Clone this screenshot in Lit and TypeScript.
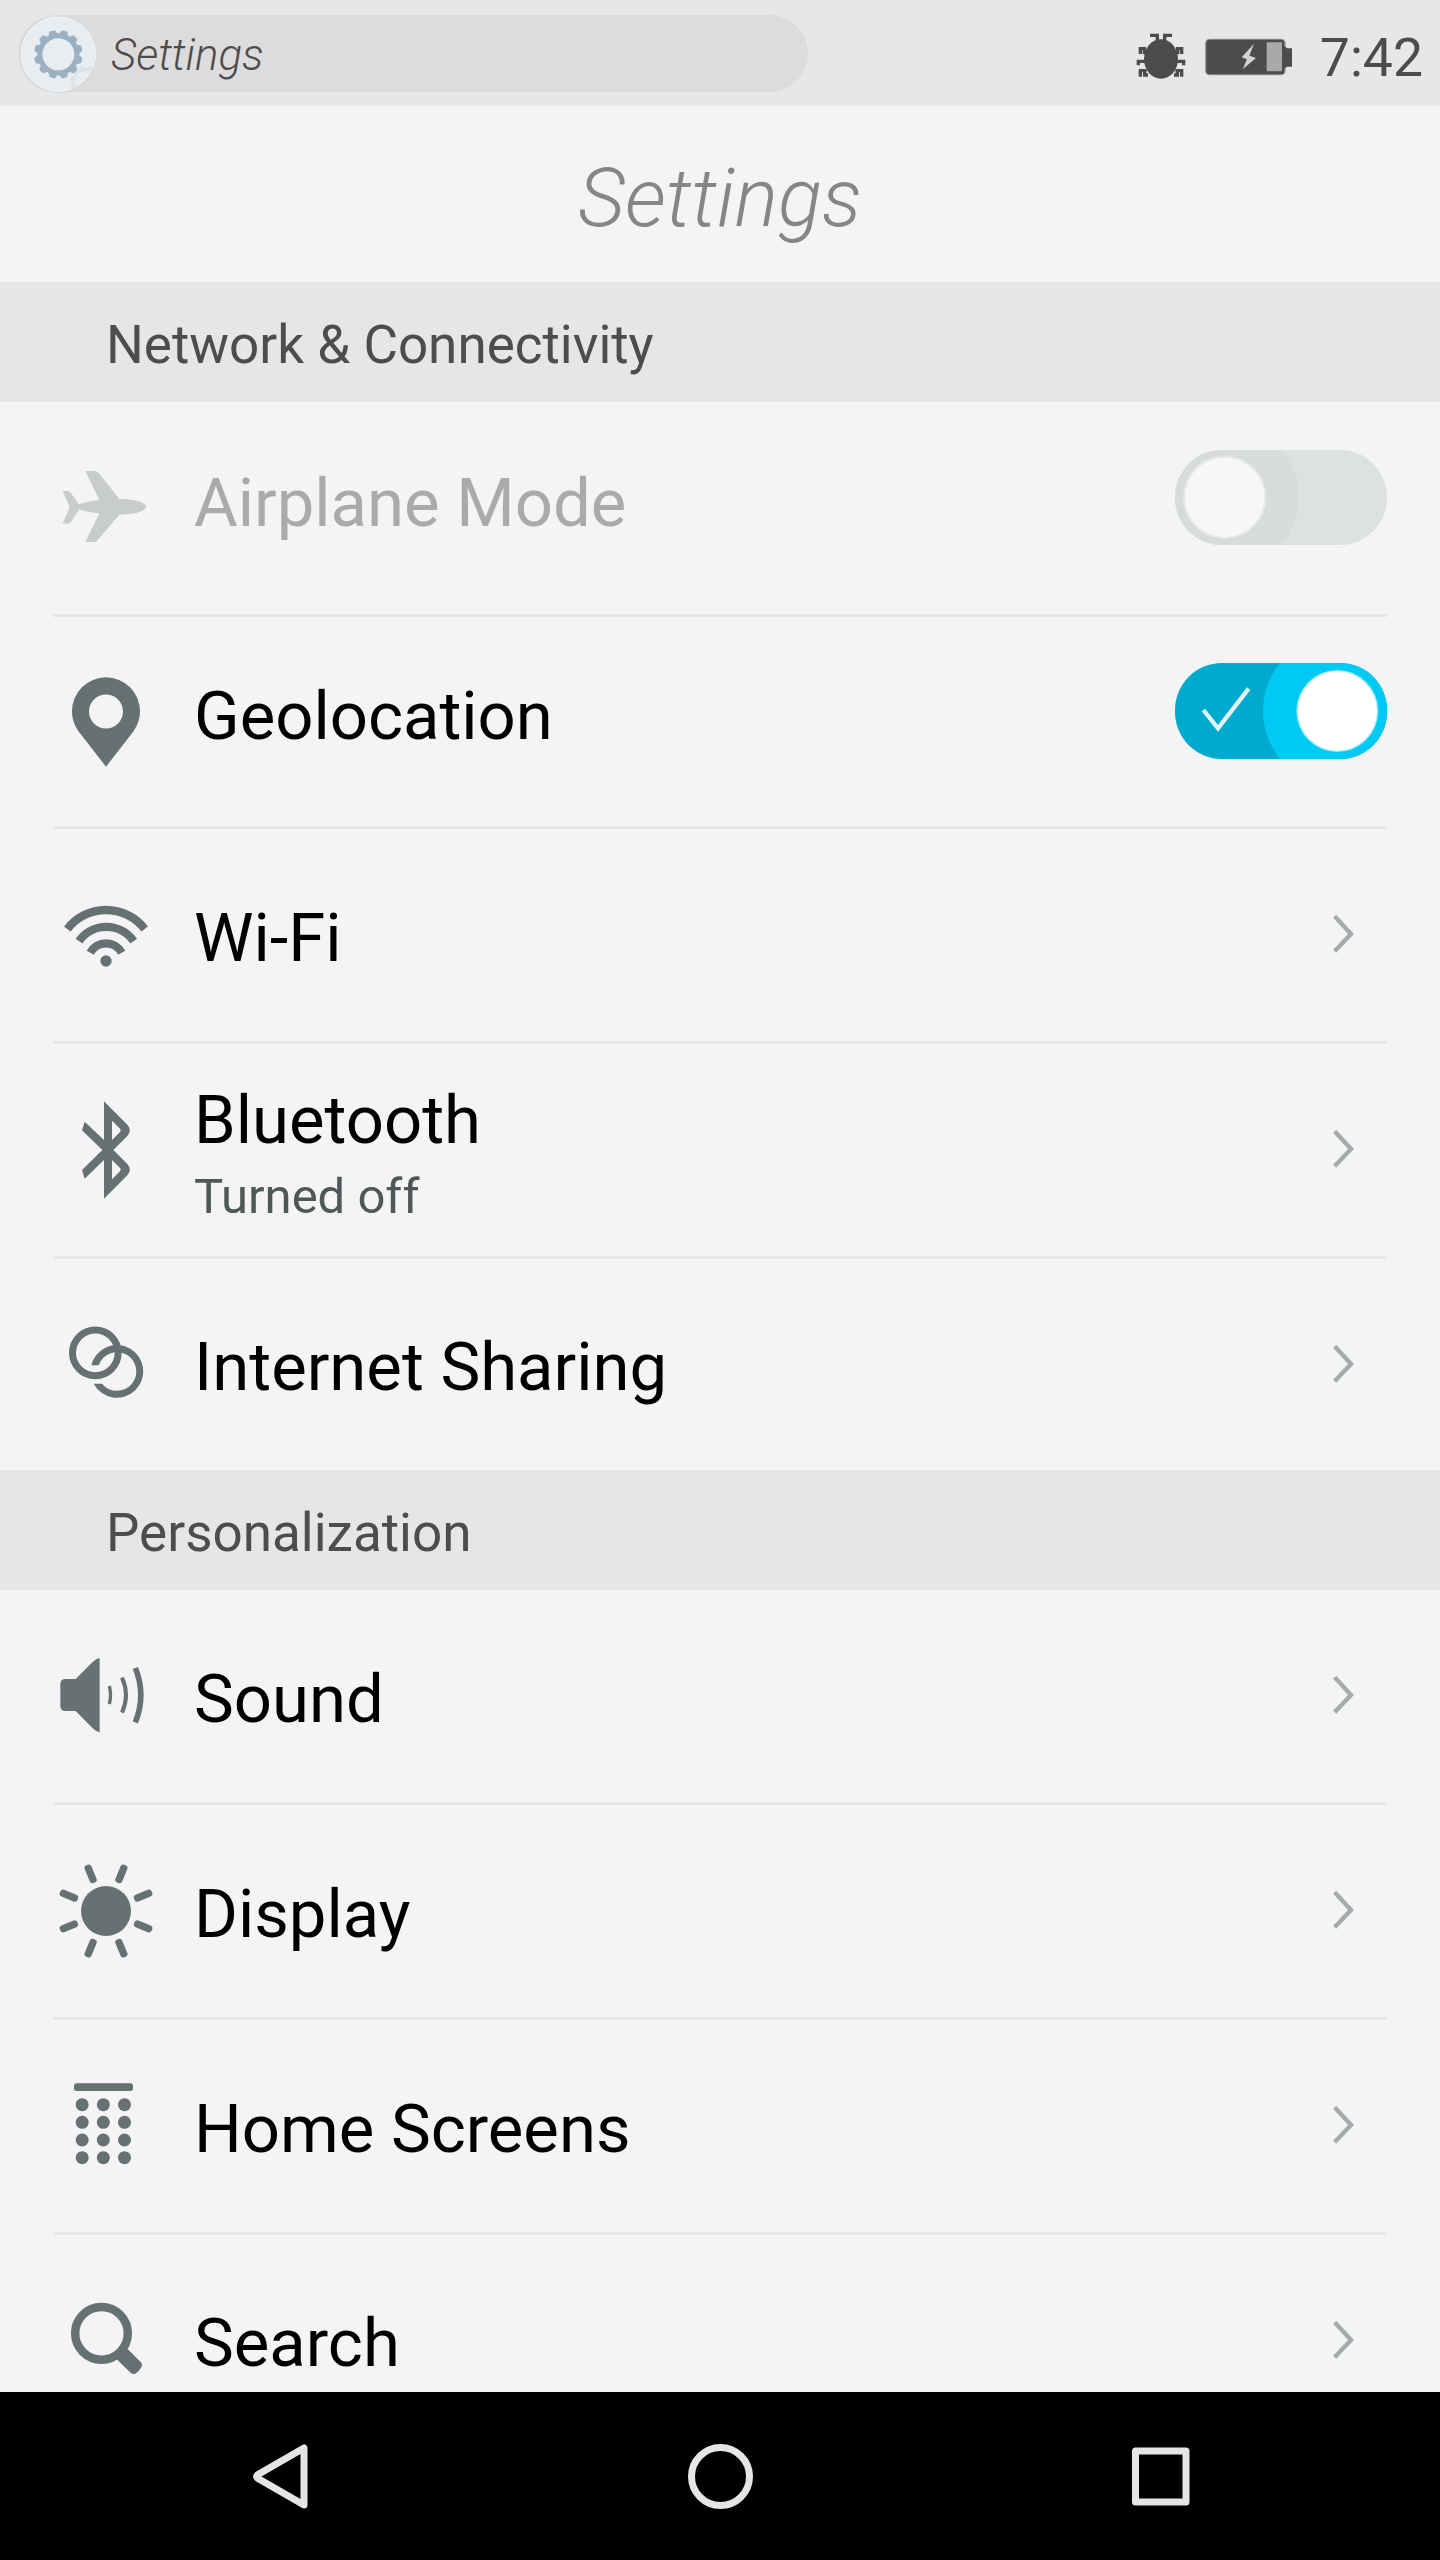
import { LitElement, html, svg, css, nothing } from "lit";
import { customElement, property } from "lit/decorators.js";
import { classMap } from "lit/directives/class-map.js";

// Outline of a gear with rounded teeth, as a closed path.
function gear(cx: number, cy: number, body: number, tip: number, teeth: number): string {
  const step = (Math.PI * 2) / teeth;
  const at = (r: number, a: number) =>
    `${(cx + r * Math.sin(a)).toFixed(1)} ${(cy - r * Math.cos(a)).toFixed(1)}`;
  let d = "";
  for (let i = 0; i < teeth; i++) {
    const a = (i + 0.5) * step;
    d += `${i ? "L" : "M"}${at(body, a - step * 0.42)}`;
    d += `Q${at(body + 2, a - step * 0.32)} ${at(tip - 4, a - step * 0.3)}`;
    d += `Q${at(tip, a - step * 0.27)} ${at(tip, a - step * 0.14)}`;
    d += `L${at(tip, a + step * 0.14)}`;
    d += `Q${at(tip, a + step * 0.27)} ${at(tip - 4, a + step * 0.3)}`;
    d += `Q${at(body + 2, a + step * 0.32)} ${at(body, a + step * 0.42)}`;
  }
  return d + "Z";
}

// Row icons: each has its own drawing space, three units to a pixel.
const ICONS: Record<string, { box: string; art: unknown }> = {
  airplane: {
    box: "159 396 426 636",
    art: svg`<path d="M438 710C438 697 402 687 358 687L298 611Q292 603 284 603H256L298 690Q262 694 236 703L213 669Q209 663 203 663H188L209 711L188 761H203Q209 761 213 755L238 718Q262 727 298 730L256 816H288L358 734C402 733 438 724 438 710Z"/>`,
  },
  location: {
    box: "39 -69 426 636",
    art: svg`<path fill-rule="evenodd" d="M198 112A102 102 0 0 0 96 214C96 240 106 262 120 280L198 380L276 280C290 262 300 240 300 214A102 102 0 0 0 198 112ZM198 163.500A51 51 0 1 1 198 265.500A51 51 0 1 1 198 163.500Z"/>`,
  },
  wifi: {
    box: "39 567 426 636",
    art: svg`<circle cx="198" cy="963" r="17"/>
      <g fill="none" stroke="currentColor" stroke-width="25">
        <path d="M151 938A53.400 53.400 0 0 1 245 938"/>
        <path d="M117 903.500A99.700 99.700 0 0 1 281 903.500"/>
        <path d="M82 867A146.500 146.500 0 0 1 314 867"/>
      </g>`,
  },
  bluetooth: {
    box: "39 -48 426 636",
    art: svg`<path fill-rule="evenodd" d="M192 124L262 194Q277 211 262 228L220 270L262 312Q277 329 262 346L192 416V300L134 356L126 330L187 270L126 211L134 185L192 240ZM216 182V240L240 216Q245 211 240 206ZM216 300V358L240 334Q245 329 240 324Z"/>`,
  },
  sharing: {
    box: "39 597 426 636",
    art: svg`<circle cx="166" cy="878.500" r="68.500" fill="none" stroke="currentColor" stroke-width="21"/>
      <path d="M154 916A79 79 0 1 1 161 971H186A58 58 0 1 0 176 916Z"/>`,
  },
  sound: {
    box: "39 -120 426 636",
    art: svg`<path d="M76 147H107L158 96Q168 85 179 84V307Q168 305 158 295L107 243H76Q61 243 61 228V162Q61 147 76 147Z"/>
      <g fill="none" stroke="currentColor">
        <path stroke-width="10" d="M208 168Q215 195 208 222"/>
        <path stroke-width="12" d="M246 143Q270 195 246 248"/>
        <path stroke-width="17" d="M286 114Q319 195 286 277"/>
      </g>`,
  },
  display: {
    box: "39 525 426 636",
    art: svg`<circle cx="198" cy="843" r="75"/>
      ${[0, 1, 2, 3, 4, 5, 6, 7].map(
        (i) => svg`<rect x="187" y="694" width="22" height="57" rx="9" transform=${`rotate(${22.5 + i * 45} 198 843)`}/>`
      )}`,
  },
  home: {
    box: "39 -90 426 636",
    art: svg`<rect x="102" y="100" width="177" height="23" rx="8"/>
      ${[164, 217, 270, 323].map((y) =>
        [126.5, 190, 253.5].map((x) => svg`<circle cx=${x} cy=${y} r="19.500"/>`)
      )}`,
  },
  search: {
    box: "39 555 426 636",
    art: svg`<circle cx="184.500" cy="850" r="79" fill="none" stroke="currentColor" stroke-width="25.500"/>
      <path d="M263 897L302 936Q309 944 303 953Q298 962 290 968Q281 976 272 968L230 928Z"/>`,
  },
};

@customElement("toggle-switch")
export class ToggleSwitch extends LitElement {
  @property({ type: Boolean }) on = false;

  static styles = css`
    :host {
      display: block;
      width: 212px;
      height: 95px;
      border-radius: 47px;
      overflow: hidden;
      background: #dde1e2;
    }
    :host([on]) {
      height: 96px;
      background: #00aacf;
    }
    .art {
      display: block;
      width: 212px;
      height: 96px;
    }
  `;

  render() {
    return this.on
      ? html`<svg class="art" viewBox="0 0 636 288">
          <circle cx="489" cy="144" r="225" fill="#00caf3" />
          <circle cx="487" cy="144" r="123" fill="#fff" opacity="0.6" />
          <circle cx="487" cy="144" r="119" fill="#fff" />
          <path d="M85 141L129 196L221 77" fill="none" stroke="#e2f6fa" stroke-width="13" />
        </svg>`
      : html`<svg class="art" viewBox="0 0 636 288">
          <circle cx="145" cy="143" r="226" fill="#d7dbdc" />
          <circle cx="149" cy="142" r="125" fill="#f7f7f7" opacity="0.5" />
          <circle cx="149" cy="142" r="119" fill="#f7f7f7" />
        </svg>`;
  }
}

@customElement("setting-row")
export class SettingRow extends LitElement {
  @property() icon = "";
  @property() label = "";
  @property() note = "";
  @property() control: "link" | "on" | "off" = "link";
  @property({ type: Boolean }) last = false;

  static styles = css`
    :host {
      display: block;
      padding: 0 53px;
    }
    .row {
      box-sizing: border-box;
      height: 215px;
      display: flex;
      align-items: flex-start;
      border-bottom: 3px solid #e6e6e2;
    }
    .row.on {
      height: 212px;
    }
    .row.last {
      height: 211px;
      border-bottom: 0;
    }
    .icon {
      flex: none;
      width: 142px;
      height: 212px;
      margin-bottom: -12px;
      color: #667173;
      fill: currentColor;
    }
    .text {
      flex: 1;
      margin-left: -1px;
      padding-top: 69px;
      color: #000;
    }
    .label {
      font-size: 67px;
      line-height: 80px;
      white-space: nowrap;
    }
    .note {
      font-size: 49px;
      line-height: 58px;
      color: #4f5859;
    }
    .last .text {
      padding-top: 68px;
    }
    .noted .text {
      padding-top: 36px;
    }
    .noted .note {
      padding-top: 8px;
    }
    .off .text {
      padding-top: 61px;
      color: #aaa;
    }
    .off .icon {
      color: #c8cccd;
    }
    .on .text {
      padding-top: 59px;
    }
    .switch {
      margin-top: 48px;
    }
    .on .switch {
      margin-top: 46px;
    }
    .chevron {
      flex: none;
      width: 24px;
      height: 44px;
      margin: 83px 32px 0 0;
    }
  `;

  render() {
    const icon = ICONS[this.icon];
    const classes = {
      row: true,
      on: this.control === "on",
      off: this.control === "off",
      last: this.last,
      noted: !!this.note,
    };
    return html`<div class=${classMap(classes)}>
      <svg class="icon" viewBox=${icon.box}>${icon.art}</svg>
      <div class="text">
        <div class="label">${this.label}</div>
        ${this.note ? html`<div class="note">${this.note}</div>` : nothing}
      </div>
      ${this.control === "link"
        ? html`<svg class="chevron" viewBox="93 96 72 132">
            <path d="M104 109L153 162L104 214" fill="none" stroke="#a3abac" stroke-width="13" />
          </svg>`
        : html`<toggle-switch class="switch" ?on=${this.control === "on"}></toggle-switch>`}
    </div>`;
  }
}

@customElement("app-root")
export class AppRoot extends LitElement {
  static styles = css`
    :host {
      display: flex;
      flex-direction: column;
      width: 1440px;
      height: 2560px;
      overflow: hidden;
      background: #f4f4f4;
      font-family: Roboto, "Liberation Sans", sans-serif;
    }
    .status {
      flex: none;
      box-sizing: border-box;
      height: 106px;
      padding: 0 17px 0 16px;
      display: flex;
      align-items: flex-start;
      background: #e7e7e7;
      color: #4d4b4c;
    }
    .pill {
      box-sizing: border-box;
      width: 790px;
      height: 77px;
      margin: 15px auto 0 2px;
      display: flex;
      border-radius: 39px;
      background: #dcdcdc;
    }
    .badge {
      flex: none;
      width: 84px;
      height: 80px;
      margin: -1px 0 0 -2px;
    }
    .app {
      margin-left: 11px;
      font-size: 43.8px;
      font-weight: 300;
      font-style: italic;
      line-height: 81px;
    }
    .bug {
      width: 52px;
      height: 50px;
      margin: 31px 16px 0 0;
    }
    .battery {
      width: 90px;
      height: 40px;
      margin: 37px 27px 0 0;
    }
    .time {
      margin-top: 26px;
      font-size: 53.5px;
      line-height: 64px;
    }
    .title {
      flex: none;
      height: 176px;
      margin: 0;
      font-size: 81.5px;
      font-weight: 300;
      font-style: italic;
      line-height: 184px;
      text-align: center;
      color: #868686;
    }
    .list {
      flex: 1;
      min-height: 0;
      overflow: hidden;
    }
    .section {
      height: 120px;
      margin: 0;
      padding-left: 106px;
      font-size: 53px;
      font-weight: 400;
      line-height: 126px;
      background: #e6e6e6;
      color: #4d4d4d;
    }
    .nav {
      flex: none;
      height: 168px;
      padding: 0 60px;
      display: grid;
      grid-template-columns: repeat(3, 1fr);
      place-items: center;
      background: #000;
    }
    .key {
      width: 80px;
      height: 80px;
      fill: none;
      stroke: #e5e5e5;
      stroke-width: 7;
      stroke-linejoin: round;
    }
  `;

  render() {
    return html`
      <header class="status">
        <div class="pill">
          <svg class="badge" viewBox="48 42 252 240">
            <defs>
              <clipPath id="disc"><circle cx="175" cy="163" r="112" /></clipPath>
            </defs>
            <circle cx="173" cy="163" r="116" fill="#dadada" />
            <circle cx="176" cy="165" r="113" fill="#c9cdd0" />
            <circle cx="175" cy="163" r="112" fill="#e7edf1" stroke="#eff5f9" stroke-width="3" />
            <g clip-path="url(#disc)">
              <path d=${gear(259, 247, 42, 50, 12)} fill="#dbe3e9" />
              <circle cx="259" cy="247" r="34" fill="#e7edf1" />
            </g>
            <path d=${gear(175, 163, 63, 73, 12)} fill="#9bb1c2" />
            <circle cx="175" cy="163" r="48" fill="#e7edf1" />
          </svg>
          <span class="app">Settings</span>
        </div>
        <svg class="bug" viewBox="105 93 156 150">
          <ellipse cx="183" cy="177" rx="51" ry="59" fill="#4d4b4c" />
          <g fill="none" stroke="#4d4b4c" stroke-width="10">
            <path d="M150 106H172V124M216 106H194V124" />
            <path d="M121 162V146H133V158H146M245 162V146H233V158H220" />
            <path d="M115 196V179M110 184H136M251 196V179M256 184H230" />
            <path d="M121 230V212H140M134 207V225H144M245 230V212H226M232 207V225H222" />
          </g>
        </svg>
        <svg class="battery" viewBox="309 111 270 120">
          <rect x="315" y="116" width="242" height="110" rx="14" fill="#4d4b4c" opacity="0.5" />
          <rect x="319" y="119" width="234" height="104" rx="10" fill="#4d4b4c" />
          <path d="M552 138L562 145H576V200H562L552 206Z" fill="#4d4b4c" />
          <rect x="500" y="127" width="46" height="87" rx="3" fill="#a9a9a9" />
          <path d="M462 131L425 172L441 178L428 208L468 174L448 167Z" fill="#d4d4d4" />
        </svg>
        <span class="time">7:42</span>
      </header>
      <h1 class="title">Settings</h1>
      <main class="list">
        <h2 class="section">Network &amp; Connectivity</h2>
        <setting-row icon="airplane" label="Airplane Mode" control="off"></setting-row>
        <setting-row icon="location" label="Geolocation" control="on"></setting-row>
        <setting-row icon="wifi" label="Wi-Fi"></setting-row>
        <setting-row icon="bluetooth" label="Bluetooth" note="Turned off"></setting-row>
        <setting-row icon="sharing" label="Internet Sharing" last></setting-row>
        <h2 class="section">Personalization</h2>
        <setting-row icon="sound" label="Sound"></setting-row>
        <setting-row icon="display" label="Display"></setting-row>
        <setting-row icon="home" label="Home Screens"></setting-row>
        <setting-row icon="search" label="Search" last></setting-row>
      </main>
      <nav class="nav">
        <svg class="key" viewBox="0 0 80 80"><path d="M64 12V69L18 42.500Q15 40.500 18 38.500Z" /></svg>
        <svg class="key" viewBox="0 0 80 80"><circle cx="40.500" cy="40.500" r="29" /></svg>
        <svg class="key" viewBox="0 0 80 80"><rect x="15.500" y="15" width="50.500" height="51" /></svg>
      </nav>
    `;
  }
}
